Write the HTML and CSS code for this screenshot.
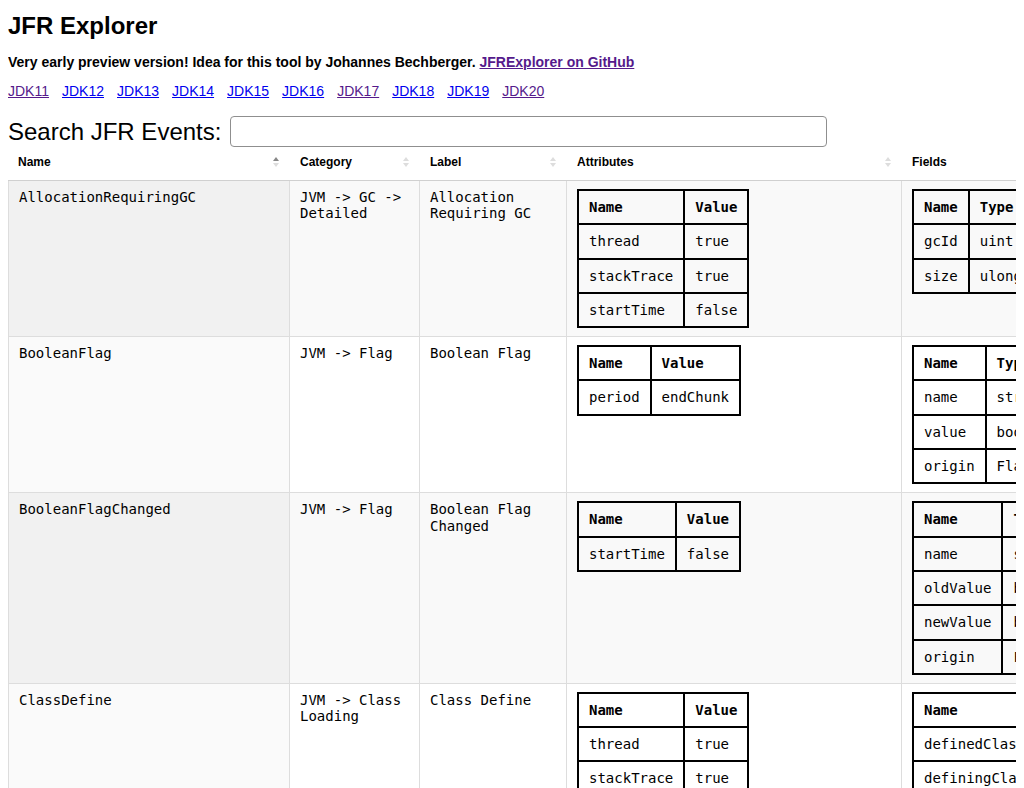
FILE: index.html
```html
<!DOCTYPE html>
<html lang="en">
<head>
  <meta charset="UTF-8">
  <meta name="viewport" content="width=device-width, initial-scale=1.0">
  <title>JFR Explorer</title>
  <link rel="stylesheet" href="styles.css">
</head>
<body>
  <h1>JFR Explorer</h1>
  <p class="intro">Very early preview version! Idea for this tool by Johannes Bechberger. <a class="visited" href="#github">JFRExplorer on GitHub</a></p>

  <div class="versions">
    <a class="visited" href="#jdk11">JDK11</a>
    <a href="#jdk12">JDK12</a>
    <a href="#jdk13">JDK13</a>
    <a href="#jdk14">JDK14</a>
    <a href="#jdk15">JDK15</a>
    <a href="#jdk16">JDK16</a>
    <a class="visited" href="#jdk17">JDK17</a>
    <a href="#jdk18">JDK18</a>
    <a href="#jdk19">JDK19</a>
    <a class="visited" href="#jdk20">JDK20</a>
  </div>

  <div class="search">
    <label for="search">Search JFR Events:</label>
    <input type="text" id="search">
  </div>

  <div class="table-wrap">
    <table class="events">
      <colgroup>
        <col class="col-name">
        <col class="col-category">
        <col class="col-label">
        <col class="col-attributes">
        <col class="col-fields">
      </colgroup>
      <thead>
        <tr>
          <th class="sortable asc">Name</th>
          <th class="sortable">Category</th>
          <th class="sortable">Label</th>
          <th class="sortable">Attributes</th>
          <th class="sortable">Fields</th>
        </tr>
      </thead>
      <tbody>
        <tr class="odd">
          <td class="sorted">AllocationRequiringGC</td>
          <td>JVM -&gt; GC -&gt; Detailed</td>
          <td>Allocation Requiring GC</td>
          <td>
            <table class="props">
              <tr><th>Name</th><th>Value</th></tr>
              <tr><td>thread</td><td>true</td></tr>
              <tr><td>stackTrace</td><td>true</td></tr>
              <tr><td>startTime</td><td>false</td></tr>
            </table>
          </td>
          <td>
            <table class="props">
              <tr><th>Name</th><th>Type</th><th>Label</th></tr>
              <tr><td>gcId</td><td>uint</td><td>Pending GC Identifier</td></tr>
              <tr><td>size</td><td>ulong</td><td>Allocation Size</td></tr>
            </table>
          </td>
        </tr>
        <tr class="even">
          <td class="sorted">BooleanFlag</td>
          <td>JVM -&gt; Flag</td>
          <td>Boolean Flag</td>
          <td>
            <table class="props">
              <tr><th>Name</th><th>Value</th></tr>
              <tr><td>period</td><td>endChunk</td></tr>
            </table>
          </td>
          <td>
            <table class="props">
              <tr><th>Name</th><th>Type</th><th>Label</th></tr>
              <tr><td>name</td><td>string</td><td>Name</td></tr>
              <tr><td>value</td><td>boolean</td><td>Value</td></tr>
              <tr><td>origin</td><td>FlagValueOrigin</td><td>Origin</td></tr>
            </table>
          </td>
        </tr>
        <tr class="odd">
          <td class="sorted">BooleanFlagChanged</td>
          <td>JVM -&gt; Flag</td>
          <td>Boolean Flag Changed</td>
          <td>
            <table class="props">
              <tr><th>Name</th><th>Value</th></tr>
              <tr><td>startTime</td><td>false</td></tr>
            </table>
          </td>
          <td>
            <table class="props">
              <tr><th>Name</th><th>Type</th><th>Label</th></tr>
              <tr><td>name</td><td>string</td><td>Name</td></tr>
              <tr><td>oldValue</td><td>boolean</td><td>Old Value</td></tr>
              <tr><td>newValue</td><td>boolean</td><td>New Value</td></tr>
              <tr><td>origin</td><td>FlagValueOrigin</td><td>Origin</td></tr>
            </table>
          </td>
        </tr>
        <tr class="even">
          <td class="sorted">ClassDefine</td>
          <td>JVM -&gt; Class Loading</td>
          <td>Class Define</td>
          <td>
            <table class="props">
              <tr><th>Name</th><th>Value</th></tr>
              <tr><td>thread</td><td>true</td></tr>
              <tr><td>stackTrace</td><td>true</td></tr>
              <tr><td>startTime</td><td>false</td></tr>
            </table>
          </td>
          <td>
            <table class="props">
              <tr><th>Name</th><th>Type</th><th>Label</th></tr>
              <tr><td>definedClass</td><td>Class</td><td>Defined Class</td></tr>
              <tr><td>definingClassLoader</td><td>ClassLoader</td><td>Defining Class Loader</td></tr>
            </table>
          </td>
        </tr>
      </tbody>
    </table>
  </div>
</body>
</html>
```

FILE: styles.css
```css
html {
  overflow: hidden;
}
body {
  font-family: 'Liberation Sans', Arial, sans-serif;
  font-size: 14px;
  margin: 0 8px;
  color: #000;
}
h1 {
  font-size: 24px;
  margin: 12px 0 0;
}
a {
  color: #0000ee;
}
a.visited {
  color: #551a8b;
}
.intro {
  font-weight: bold;
  margin: 14px 0 0;
}
.versions {
  display: flex;
  gap: 13px;
  margin-top: 13px;
}
.search {
  display: flex;
  align-items: center;
  gap: 9px;
  margin-top: 17px;
}
.search label {
  font-size: 24px;
}
.search input {
  width: 597px;
  height: 31px;
  box-sizing: border-box;
  border: 1px solid #8f8f8f;
  border-radius: 4px;
}

/* event table */
.table-wrap {
  overflow: hidden;
}
.events {
  border-collapse: separate;
  border-spacing: 0;
  table-layout: fixed;
  width: 1414px;
}
.col-name { width: 282px; }
.col-category { width: 130px; }
.col-label { width: 147px; }
.col-attributes { width: 335px; }
.col-fields { width: 520px; }

.events > thead > tr > th {
  position: relative;
  text-align: left;
  font-size: 12px;
  padding: 8px 26px 11px 10px;
  border-bottom: 1px solid #d0d0d0;
}
.events th.sortable::before,
.events th.sortable::after {
  content: "";
  position: absolute;
  right: 11px;
  border-left: 3.5px solid transparent;
  border-right: 3.5px solid transparent;
}
.events th.sortable::before {
  top: 10px;
  border-bottom: 4.5px solid #ddd;
}
.events th.sortable::after {
  top: 16px;
  border-top: 4.5px solid #ddd;
}
.events th.asc::before {
  border-bottom-color: #888;
}

.events > tbody > tr > td {
  font-family: 'DejaVu Sans Mono', Menlo, monospace;
  font-size: 14px;
  line-height: 16.3px;
  vertical-align: top;
  padding: 8px 10px;
  border-top: 1px solid #ddd;
  border-right: 1px solid #ddd;
}
.events > tbody > tr > td:first-child {
  border-left: 1px solid #ddd;
}
.events > tbody > tr:first-child > td {
  border-top: none;
}
.events tr.odd {
  background-color: #f9f9f9;
}
.events tr.odd > td.sorted {
  background-color: #f1f1f1;
}
.events tr.even > td.sorted {
  background-color: #fafafa;
}

/* attribute / field tables inside a cell */
.props {
  border-collapse: collapse;
  border: 2px solid #000;
}
.props th,
.props td {
  border: 2px solid #000;
  padding: 8px 10px;
  text-align: left;
  white-space: nowrap;
}
```
